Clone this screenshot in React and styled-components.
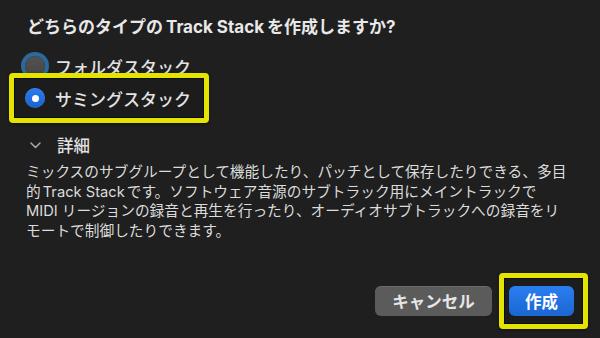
import React from 'react';
import styled, { createGlobalStyle } from 'styled-components';

const GlobalStyle = createGlobalStyle`
  html, body {
    margin: 0;
    padding: 0;
    background: #1f1f1f;
  }
  body {
    font-family: "Inter", "Noto Sans CJK JP", sans-serif;
    -webkit-font-smoothing: antialiased;
  }
`;

const Dialog = styled.div`
  width: 600px;
  height: 338px;
  box-sizing: border-box;
  padding: 16px 0 0 26px;
  background: #1f1f1f;
  color: #e4e4e4;
  overflow: hidden;
`;

const Title = styled.h1`
  margin: 0 0 0 1px;
  font-size: 17px;
  line-height: 22px;
  font-weight: 700;
  color: #e8e8e8;
  white-space: nowrap;
`;

// latin words between japanese get a little air, as the system does
const Latin = styled.span`
  margin: 0 ${(p) => p.$gap || 3}px;
`;

const RadioGroup = styled.div`
  margin-top: 15px;
  display: flex;
  flex-direction: column;
`;

const Option = styled.label`
  display: flex;
  align-items: center;
  gap: 10px;
  height: ${(p) => p.$h || 26}px;
  margin-left: ${(p) => p.$ml || 0}px;
  font-size: 17px;
  font-weight: 500;
  color: #e2e2e2;
  white-space: nowrap;
`;

const Radio = styled.span`
  position: relative;
  width: 20px;
  height: 20px;
  border-radius: 50%;
  flex-shrink: 0;
  box-sizing: border-box;
  background: ${(p) => (p.$checked ? 'linear-gradient(#2a7cf0, #1862d0)' : 'linear-gradient(#525252, #464646)')};
  box-shadow: ${(p) => (p.$focus ? '0 0 0 4px #2a6aa0' : 'inset 0 0 0 0.5px rgba(255,255,255,0.15)')};

  &::after {
    content: '';
    display: ${(p) => (p.$checked ? 'block' : 'none')};
    position: absolute;
    left: 6.5px;
    top: 6.5px;
    width: 7px;
    height: 7px;
    border-radius: 50%;
    background: #fff;
  }
`;

const Highlight = styled.div`
  position: relative;
  box-sizing: border-box;
  width: ${(p) => p.$w}px;
  height: ${(p) => p.$h}px;
  margin: ${(p) => p.$margin || 0};
  padding: ${(p) => p.$pad || 0};
  border: 5px solid #e4e400;
  border-radius: 4px;
  background: #1c1c1c;
  box-shadow: inset 0 0 0 1px #0c0c0c, 0 1px 3px rgba(0, 0, 0, 0.5);
  display: flex;
  align-items: center;
`;

const Details = styled.div`
  margin-top: 12px;
  height: 20px;
  display: flex;
  align-items: center;
  font-size: 16.5px;
  font-weight: 500;
  color: #e2e2e2;
`;

const Chevron = styled.svg`
  width: 11px;
  height: 7px;
  margin: 0 16px 0 4px;
`;

const Paragraph = styled.p`
  margin: 8px 0 0 0;
  font-size: 14.7px;
  line-height: 19.7px;
  color: #dcdcdc;
`;

const Line = styled.span`
  display: block;
  white-space: nowrap;
`;

const Footer = styled.div`
  margin-top: 31px;
  padding-right: 12px;
  display: flex;
  justify-content: flex-end;
  align-items: center;
  gap: 7px;
`;

const Button = styled.button`
  height: 30px;
  width: ${(p) => p.$w}px;
  border: none;
  border-radius: 6px;
  font-family: inherit;
  font-size: 16.5px;
  font-weight: 600;
  padding: 0;
  color: ${(p) => (p.$primary ? '#ffffff' : '#e6e6e6')};
  background: ${(p) => (p.$primary ? 'linear-gradient(#2b7ef0, #1a66d2)' : '#5b5b5b')};
  box-shadow: ${(p) => (p.$primary ? 'none' : 'inset 0 0.5px 0 rgba(255,255,255,0.2)')};
`;

export default function App() {
  return (
    <>
      <GlobalStyle />
      <Dialog>
        <Title>
          どちらのタイプの<Latin>Track Stack</Latin>を作成しますか?
        </Title>

        <RadioGroup>
          <Option $ml={-1}>
            <Radio $focus />
            フォルダスタック
          </Option>
          <Highlight $w={200} $h={50} $margin="-6px 0 0 -17px" $pad="0 0 0 11px">
            <Option $h={40}>
              <Radio $checked />
              サミングスタック
            </Option>
          </Highlight>
        </RadioGroup>

        <Details>
          <Chevron viewBox="0 0 11 7">
            <polyline points="1,1 5.5,5.5 10,1" fill="none" stroke="#a8a8a8" strokeWidth="1.5" strokeLinecap="round" strokeLinejoin="round" />
          </Chevron>
          詳細
        </Details>

        <Paragraph>
          <Line>ミックスのサブグループとして機能したり、パッチとして保存したりできる、多目</Line>
          <Line>
            的<Latin $gap={2}>Track Stack</Latin>です。ソフトウェア音源のサブトラック用にメイントラックで
          </Line>
          <Line>
            MIDI<Latin $gap={2} />リージョンの録音と再生を行ったり、オーディオサブトラックへの録音をリ
          </Line>
          <Line>モートで制御したりできます。</Line>
        </Paragraph>

        <Footer>
          <Button $w={117}>キャンセル</Button>
          <Highlight $w={89} $h={56} $pad="0 8px 0 5px">
            <Button $primary $w={65}>作成</Button>
          </Highlight>
        </Footer>
      </Dialog>
    </>
  );
}
